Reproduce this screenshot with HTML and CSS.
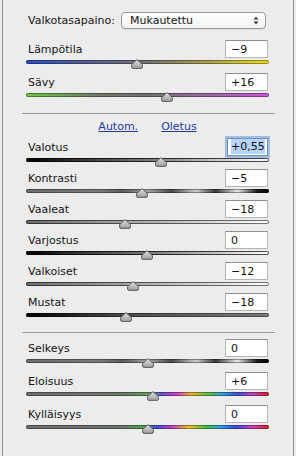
FILE: index.html
```html
<!DOCTYPE html>
<html lang="fi">
<head>
    <meta charset="UTF-8" />
    <meta name="viewport" content="width=device-width, initial-scale=1.0" />
    <title>Perussäädöt</title>
    <link rel="stylesheet" href="styles.css">
</head>
<body>
    <main class="panel">
        <div class="wb-row">
            <span class="wb-label">Valkotasapaino:</span>
            <div class="select">
                <span>Mukautettu</span>
                <svg class="select-arrows" width="6" height="9" viewBox="0 0 6 9">
                    <path d="M0.5 3.5 L3 0.5 L5.5 3.5 Z M0.5 5.5 L3 8.5 L5.5 5.5 Z" fill="#444"/>
                </svg>
            </div>
        </div>

        <section class="group group-loose">
            <div class="row">
                <div class="head"><span>Lämpötila</span><div class="value">−9</div></div>
                <div class="slider"><div class="track temp"></div><svg class="thumb" style="left: 105px" width="12" height="10" viewBox="0 0 12 10"><use href="#knob"/></svg></div>
            </div>
            <div class="row">
                <div class="head"><span>Sävy</span><div class="value">+16</div></div>
                <div class="slider"><div class="track tint"></div><svg class="thumb" style="left: 135px" width="12" height="10" viewBox="0 0 12 10"><use href="#knob"/></svg></div>
            </div>
        </section>

        <hr class="sep first-sep">

        <div class="links">
            <a href="#">Autom.</a>
            <a href="#">Oletus</a>
        </div>

        <section class="group">
            <div class="row">
                <div class="head"><span>Valotus</span><div class="value focused"><span class="selected">+0,55</span></div></div>
                <div class="slider"><div class="track exposure"></div><svg class="thumb" style="left: 129px" width="12" height="10" viewBox="0 0 12 10"><use href="#knob"/></svg></div>
            </div>
            <div class="row">
                <div class="head"><span>Kontrasti</span><div class="value">−5</div></div>
                <div class="slider"><div class="track contrast"></div><svg class="thumb" style="left: 110px" width="12" height="10" viewBox="0 0 12 10"><use href="#knob"/></svg></div>
            </div>
            <div class="row">
                <div class="head"><span>Vaaleat</span><div class="value">−18</div></div>
                <div class="slider"><div class="track highlights"></div><svg class="thumb" style="left: 93px" width="12" height="10" viewBox="0 0 12 10"><use href="#knob"/></svg></div>
            </div>
            <div class="row">
                <div class="head"><span>Varjostus</span><div class="value">0</div></div>
                <div class="slider"><div class="track shadows"></div><svg class="thumb" style="left: 115px" width="12" height="10" viewBox="0 0 12 10"><use href="#knob"/></svg></div>
            </div>
            <div class="row">
                <div class="head"><span>Valkoiset</span><div class="value">−12</div></div>
                <div class="slider"><div class="track whites"></div><svg class="thumb" style="left: 101px" width="12" height="10" viewBox="0 0 12 10"><use href="#knob"/></svg></div>
            </div>
            <div class="row">
                <div class="head"><span>Mustat</span><div class="value">−18</div></div>
                <div class="slider"><div class="track blacks"></div><svg class="thumb" style="left: 94px" width="12" height="10" viewBox="0 0 12 10"><use href="#knob"/></svg></div>
            </div>
        </section>

        <hr class="sep second-sep">

        <section class="group group-loose last-group">
            <div class="row">
                <div class="head"><span>Selkeys</span><div class="value">0</div></div>
                <div class="slider"><div class="track clarity"></div><svg class="thumb" style="left: 116px" width="12" height="10" viewBox="0 0 12 10"><use href="#knob"/></svg></div>
            </div>
            <div class="row">
                <div class="head"><span>Eloisuus</span><div class="value">+6</div></div>
                <div class="slider"><div class="track vibrance"></div><svg class="thumb" style="left: 121px" width="12" height="10" viewBox="0 0 12 10"><use href="#knob"/></svg></div>
            </div>
            <div class="row">
                <div class="head"><span>Kylläisyys</span><div class="value">0</div></div>
                <div class="slider"><div class="track saturation"></div><svg class="thumb" style="left: 116px" width="12" height="10" viewBox="0 0 12 10"><use href="#knob"/></svg></div>
            </div>
        </section>
    </main>

    <svg width="0" height="0" class="defs">
        <defs>
            <linearGradient id="knobFill" x1="0" y1="0" x2="0" y2="1">
                <stop offset="0" stop-color="#e6e6e6"/>
                <stop offset="1" stop-color="#9a9a9a"/>
            </linearGradient>
            <symbol id="knob" viewBox="0 0 12 10">
                <path d="M6 0.6 L11.4 5.6 L11.4 8 Q11.4 9.4 10 9.4 L2 9.4 Q0.6 9.4 0.6 8 L0.6 5.6 Z" fill="url(#knobFill)" stroke="#555" stroke-width="0.9" stroke-linejoin="round"/>
            </symbol>
        </defs>
    </svg>
</body>
</html>
```

FILE: styles.css
```css
body {
    margin: 0;
    background-color: #ececec;
    font-family: "DejaVu Sans", Verdana, sans-serif;
    font-size: 11px;
    color: #141414;
}
.panel {
    box-sizing: border-box;
    height: 456px;
    margin: 0 2px;
    padding: 12px 24px 0 23px;
    border-left: 1px solid #8c8c8c;
    border-right: 1px solid #8c8c8c;
}
.defs {
    position: absolute;
}
.wb-row {
    display: flex;
    align-items: center;
    height: 17px;
}
.wb-label {
    margin-left: 2px;
}
.select {
    box-sizing: border-box;
    display: flex;
    align-items: center;
    justify-content: space-between;
    width: 145px;
    height: 17px;
    margin-left: auto;
    margin-right: 3px;
    padding: 0 6px 0 8px;
    background: linear-gradient(#ffffff, #f2f2f2);
    border: 1px solid #9a9a9a;
    border-radius: 4px;
    box-shadow: 0 1px 0 rgba(0, 0, 0, 0.06);
}
.group {
    display: flex;
    flex-direction: column;
}
.group-loose {
    margin-top: 11px;
}
.row {
    height: 31px;
}
.group-loose .row {
    height: 33px;
}
.head {
    display: flex;
    align-items: center;
    justify-content: space-between;
    height: 18px;
    padding-left: 2px;
}
.value {
    box-sizing: border-box;
    width: 43px;
    height: 18px;
    margin-right: 1px;
    padding: 2px 0 0 5px;
    background-color: #ffffff;
    border: 1px solid #b4b4b4;
    border-top-color: #8e8e8e;
    font-size: 11px;
    color: #111;
}
.value.focused {
    width: 41px;
    padding: 1px 0 0 3px;
    border-color: #6e8fbf;
    box-shadow: 0 0 0 2px #a3bde0;
}
.selected {
    background-color: #b6d3fb;
    padding: 1px 0;
}
.slider {
    position: relative;
    height: 10px;
    margin-top: 2px;
}
.track {
    box-sizing: border-box;
    height: 4px;
    margin-top: 2px;
    border-radius: 2px;
    box-shadow: inset 0 0 0 1px rgba(0, 0, 0, 0.35);
}
.thumb {
    position: absolute;
    top: -1px;
}
.temp {
    background: linear-gradient(to right, #2a4ec6, #5a6090 25%, #727272 50%, #aaa250 75%, #eadc1c);
}
.tint {
    background: linear-gradient(to right, #6ac842, #737a6c 30%, #727272 50%, #9a6aa2 75%, #cc54dc);
}
.exposure {
    background: linear-gradient(to right, #000000, #7a7a7a 50%, #ffffff);
    box-shadow: inset 0 0 0 1px rgba(0, 0, 0, 0.7);
}
.contrast,
.clarity {
    background: linear-gradient(to right, #6e6e6e, #7a7a7a 30%, #5c5c5c 40%, #a4a4a4 50%, #4c4c4c 60%, #cacaca 70%, #3a3a3a 78%, #e6e6e6 87%, #1e1e1e 95%, #000000);
}
.highlights,
.whites {
    background: linear-gradient(to right, #6e6e6e, #b0b0b0 50%, #ffffff);
    box-shadow: inset 0 0 0 1px rgba(0, 0, 0, 0.55);
}
.shadows {
    background: linear-gradient(to right, #000000, #7a7a7a 50%, #ffffff);
    box-shadow: inset 0 0 0 1px rgba(0, 0, 0, 0.7);
}
.blacks {
    background: linear-gradient(to right, #000000, #4a4a4a 40%, #7a7a7a);
}
.vibrance {
    background: linear-gradient(to right, #6e6e6e, #70786e 40%, #5aa05a 50%, #6058d0 56%, #d040c8 62%, #e8b030 68%, #60c040 75%, #30a0d8 81%, #4050d8 87%, #c040c8 93%, #e02020);
}
.saturation {
    background: linear-gradient(to right, #6e6e6e, #6e766e 40%, #4aa04e 48%, #4050d8 54%, #c040c8 60%, #f0c020 67%, #40c040 74%, #30a0e0 80%, #3050e0 86%, #d040c0 93%, #e02020);
}
.sep {
    height: 0;
    margin: 7px -6px 0 -4px;
    border: none;
    border-top: 1px solid #9c9c9c;
}
.second-sep {
    margin-top: 8px;
}
.last-group {
    margin-top: 6px;
}
.links {
    display: flex;
    justify-content: center;
    gap: 23px;
    height: 14px;
    margin-top: 6px;
    margin-bottom: 4px;
    line-height: 14px;
}
.links a {
    color: #1d3aa6;
    text-decoration: underline;
}
```
